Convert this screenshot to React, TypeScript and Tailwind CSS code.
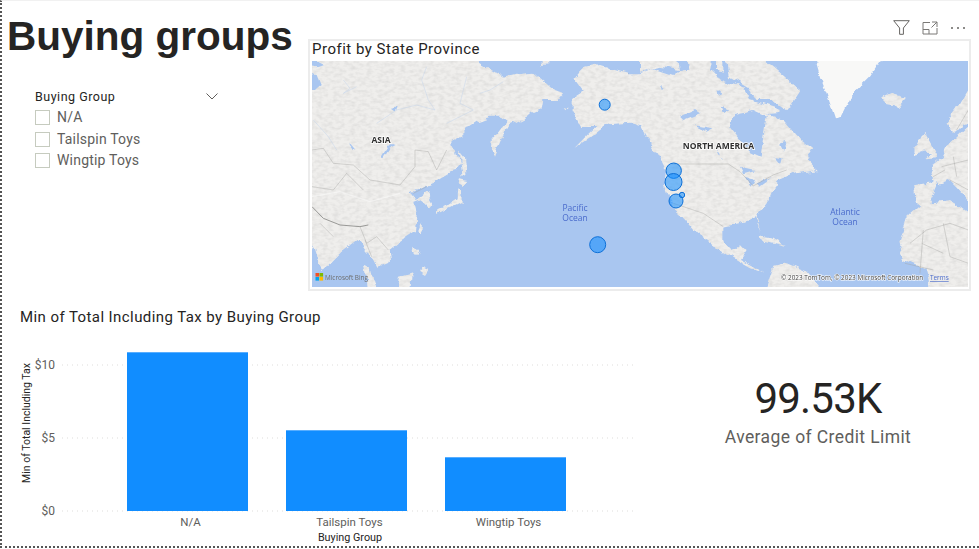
const ui = { fontFamily: "Roboto, 'Open Sans', sans-serif" };

const slicerItems = ["N/A", "Tailspin Toys", "Wingtip Toys"];

const bars = [
  { label: "N/A", x: 127, w: 121, top: 352 },
  { label: "Tailspin Toys", x: 286, w: 121, top: 430 },
  { label: "Wingtip Toys", x: 445, w: 121, top: 457 },
];

const ticks = [
  { label: "$10", y: 365 },
  { label: "$5", y: 438 },
  { label: "$0", y: 511 },
];

const bubbles = [
  { x: 604.7, y: 104.7, r: 5.5 },
  { x: 597.7, y: 244.7, r: 8 },
  { x: 673.7, y: 170.7, r: 7.7 },
  { x: 673.5, y: 182, r: 8.5 },
  { x: 676, y: 201, r: 7 },
  { x: 682, y: 195, r: 2.7 },
];

const LAND = "#efeeec";
const SEA = "#a9c6f0";

function WorldMap() {
  return (
    <svg width="656" height="226" viewBox="312 61 656 226" className="block">
      <defs>
        <filter id="relief" x="-10%" y="-10%" width="120%" height="120%" colorInterpolationFilters="sRGB">
          <feTurbulence type="fractalNoise" baseFrequency="0.025" numOctaves="5" seed="3" result="w" />
          <feDisplacementMap in="SourceGraphic" in2="w" scale="26" xChannelSelector="R" yChannelSelector="G" result="d" />
          <feTurbulence type="fractalNoise" baseFrequency="0.06 0.1" numOctaves="2" seed="7" result="n" />
          <feColorMatrix in="n" type="matrix" values="0 0 0 0 0.62  0 0 0 0 0.62  0 0 0 0 0.62  0 0 0 0.4 -0.16" result="g" />
          <feComposite in="g" in2="d" operator="in" result="t" />
          <feMerge>
            <feMergeNode in="d" />
            <feMergeNode in="t" />
          </feMerge>
        </filter>
        <filter id="coast" x="-10%" y="-10%" width="120%" height="120%" colorInterpolationFilters="sRGB">
          <feTurbulence type="fractalNoise" baseFrequency="0.04" numOctaves="4" seed="11" result="w" />
          <feDisplacementMap in="SourceGraphic" in2="w" scale="14" xChannelSelector="R" yChannelSelector="G" />
        </filter>
        <filter id="soft">
          <feGaussianBlur stdDeviation="0.4" />
        </filter>
      </defs>
      <rect x="312" y="61" width="656" height="226" fill={SEA} />

      <g filter="url(#soft)">
        {/* left half, drawn in crop coordinates */}
        <g transform="translate(300 10) scale(0.3333)">
          <g filter="url(#relief)" fill={LAND}>
            <path d="M0 110 L525 110 L530 153 L560 170 L610 200 L650 190 L700 185 L750 230 L790 245 L770 270 L730 270 L725 300 L680 320 L630 345 L605 385 L582 440 L575 420 L578 390 L600 360 L620 335 L600 320 L570 320 L530 335 L500 355 L470 385 L450 405 L470 420 L480 455 L455 490 L420 510 L375 530 L335 550 L350 570 L380 550 L397 580 L388 592 L365 570 L340 580 L350 620 L345 660 L300 690 L265 720 L270 755 L235 770 L222 745 L200 725 L180 700 L170 690 L130 720 L80 770 L60 780 L45 730 L36 700 L0 690 Z" />
            <path d="M195 770 L212 780 L235 860 L205 860 L200 795 Z" />
            <path d="M480 425 L492 440 L496 490 L488 500 L482 460 Z" />
            <path d="M480 505 L505 510 L490 528 L476 520 Z" />
            <path d="M472 538 L484 545 L485 575 L445 595 L410 612 L412 598 L440 585 L470 565 Z" />
            <path d="M362 640 L372 650 L362 668 L356 655 Z" />
            <path d="M345 710 L358 725 L352 742 L340 730 Z" />
            <path d="M365 770 L385 780 L375 795 L360 785 Z" />
            <path d="M300 800 L335 790 L330 860 L290 860 Z" />
            <path d="M785 290 L800 295 L795 298 Z" />
            <path d="M725 130 L745 130 L745 163 L725 165 Z" />
          </g>
          <g filter="url(#coast)" fill={SEA}>
            <path d="M20 190 L50 195 L62 225 L45 240 L20 240 Z" />
            <path d="M20 140 L70 165 L50 172 L20 168 Z" />
            <path d="M250 445 L270 415 L290 405 L282 402 L262 412 L244 442 Z" />
            <path d="M150 400 L165 418 L158 420 L146 404 Z" />
            <path d="M270 295 L290 290 L285 305 Z" />
          </g>
          <g fill="none" stroke="#bccfeb" strokeWidth="1.2">
            <path d="M380 170 L365 210 L385 270 L405 300 L350 285 L290 300 L230 340" />
            <path d="M130 210 L150 235 L130 250 L170 230" />
            <path d="M500 200 L480 280 L520 300 L440 340" />
            <path d="M540 250 L570 240 L610 215" />
            <path d="M40 330 L85 380 L110 420" />
          </g>
          <g fill="none" stroke="#a2a2a0" strokeWidth="1.2">
            <path d="M36 420 L70 415 L100 460 L160 465 L210 510 L300 525 L345 470 L345 420 L385 425 L410 480 L440 420" />
            <path d="M36 530 L100 540 L140 490 L190 540" />
            <path d="M36 590 L70 625 L120 645 L180 650 L205 645" strokeWidth="2.6" stroke="#8b8b89" />
            <path d="M180 650 L200 700 L230 680 L265 720 M195 690 L215 740 M60 640 L100 680" />
            <path d="M340 550 L380 530" />
          </g>
          <path d="M36 560 L120 545 L210 575 L300 550" stroke="#ffffff" strokeWidth="4" fill="none" opacity="0.4" />
          <path d="M985 190 L985 335" stroke="#a8a8a5" strokeWidth="1.5" fill="none" />
        </g>

        {/* right half */}
        <g transform="translate(640 10) scale(0.3333)">
          <g filter="url(#relief)" fill={LAND}>
            <path d="M-200 210 L-170 175 L-120 165 L-35 190 L0 190 L40 175 L100 195 L130 175 L200 170 L230 200 L270 215 L310 230 L330 270 L360 280 L420 300 L410 310 L380 312 L430 330 L480 390 L520 420 L500 450 L530 480 L470 490 L420 510 L395 545 L385 570 L355 610 L350 625 L362 660 L345 625 L300 640 L250 650 L250 690 L275 720 L300 700 L320 720 L300 750 L340 770 L370 790 L330 775 L260 735 L210 700 L170 670 L130 620 L95 590 L75 530 L80 490 L60 450 L20 380 L0 345 L-35 335 L-90 340 L-120 360 L-150 385 L-190 410 L-150 370 L-125 345 L-180 345 L-205 300 L-205 265 L-175 245 Z" />
            <path d="M0 120 L110 120 L120 180 L60 170 L0 185 Z" />
            <path d="M135 120 L220 120 L205 190 L150 180 Z" />
            <path d="M255 120 L340 120 L400 170 L480 240 L440 300 L400 270 L350 270 L320 230 L270 200 Z" />
            <path d="M225 120 L250 120 L250 185 L225 180 Z" />
            <path d="M730 265 L760 250 L795 260 L770 290 L740 285 Z" />
            <path d="M350 675 L395 682 L440 708 L400 698 L365 690 Z" />
            <path d="M370 860 L400 770 L440 760 L500 785 L560 860 Z" />
            <path d="M820 425 L850 362 L865 390 L895 445 L850 448 L870 430 Z" />
            <path d="M820 410 L840 400 L845 430 L822 435 Z" />
            <path d="M870 500 L880 465 L910 440 L930 400 L985 350 L1030 350 L1030 570 L985 570 L950 530 L930 510 L905 520 L880 515 Z" />
            <path d="M920 340 L950 300 L985 240 L1030 200 L1030 320 L950 360 L935 365 Z" />
            <path d="M826 525 L885 515 L895 520 L860 600 L830 575 Z" />
            <path d="M775 700 L800 625 L850 580 L930 570 L985 610 L1030 610 L1030 860 L880 860 L860 780 L790 750 Z" />
          </g>
          <path d="M530 165 L560 120 L745 120 L690 200 L640 250 L605 320 L585 325 L560 250 L540 200 Z" fill="#f8f8f7" filter="url(#coast)" />
          <g filter="url(#coast)" fill={SEA}>
            <path d="M380 318 L372 370 L362 440 L330 425 L300 390 L268 350 L285 312 L340 300 Z" />
            <path d="M120 320 L165 300 L180 310 L130 330 Z" />
            <path d="M160 345 L220 355 L200 365 Z" />
            <path d="M230 415 L240 430 L250 455 L236 430 Z" />
            <path d="M300 470 L345 480 L310 490 Z" />
            <path d="M315 500 L335 530 L345 510 Z" />
            <path d="M350 520 L395 505 L360 530 Z" />
            <path d="M420 400 L440 395 L432 425 Z" />
            <path d="M60 225 L75 238 L65 243 Z" />
            <path d="M245 290 L265 298 L250 306 Z" />
            <path d="M230 240 L245 252 L232 258 Z" />
            <path d="M400 440 L425 445 L420 465 Z" />
          </g>
          <g fill="none" stroke="#a2a2a0" strokeWidth="1.2">
            <path d="M95 462 L265 462 L300 485 L340 528 L400 495 L440 480" />
            <path d="M100 580 L190 610 L250 650" />
            <path d="M810 700 L860 660 L930 640 L985 660 M850 660 L840 790 M910 640 L930 740 L985 760 M845 700 L910 730" />
            <path d="M905 470 L985 450 M930 510 L985 540 M940 440 L950 500 M880 500 L915 480" />
            <path d="M950 360 L985 300" />
            <path d="M795 760 L880 780" />
          </g>
        </g>
      </g>

      <g style={{ fontFamily: "'Open Sans', sans-serif" }}>
        <text x="381" y="143" textAnchor="middle" fontSize="8.5" fontWeight="700" fill="#2f2f2f" stroke="#ffffff" strokeWidth="1.5" paintOrder="stroke">ASIA</text>
        <text x="718.5" y="149" textAnchor="middle" fontSize="8.5" fontWeight="700" fill="#2f2f2f" stroke="#ffffff" strokeWidth="1.5" paintOrder="stroke">NORTH AMERICA</text>
        <g textAnchor="middle" fontSize="8.5" fill="#4a6bcc">
          <text x="575" y="211">Pacific</text>
          <text x="575" y="221">Ocean</text>
          <text x="845" y="215">Atlantic</text>
          <text x="845" y="225">Ocean</text>
        </g>
        <text x="325" y="279.5" fontSize="6.4" fill="#6d6d6d">Microsoft Bing</text>
        <text x="781" y="280" fontSize="6.4" fill="#3c3c3c" stroke="#ffffff" strokeWidth="1.2" paintOrder="stroke">© 2023 TomTom, © 2023 Microsoft Corporation</text>
        <text x="930" y="280" fontSize="6.4" fill="#4a6bcc" textDecoration="underline">Terms</text>
      </g>

      <rect x="315.5" y="273" width="3.6" height="3.6" fill="#f25022" />
      <rect x="319.5" y="273" width="3.6" height="3.6" fill="#7fba00" />
      <rect x="315.5" y="277" width="3.6" height="3.6" fill="#00a4ef" />
      <rect x="319.5" y="277" width="3.6" height="3.6" fill="#ffb900" />

      {bubbles.map((b) => (
        <circle key={`${b.x}-${b.y}`} cx={b.x} cy={b.y} r={b.r} fill="#118dff" fillOpacity="0.55" stroke="#0d6fd6" strokeWidth="1" />
      ))}
    </svg>
  );
}

function BarChart() {
  return (
    <svg width="640" height="217" viewBox="0 330 640 217" className="block" style={ui}>
      {ticks.map((t) => (
        <g key={t.label}>
          <line x1="62" x2="635" y1={t.y} y2={t.y} stroke="#dedddb" strokeWidth="1" strokeDasharray="1 4" />
          <text x="55" y={t.y + 4} textAnchor="end" fontSize="12" fill="#605e5c">{t.label}</text>
        </g>
      ))}
      {bars.map((b) => (
        <g key={b.label}>
          <rect x={b.x} y={b.top} width={b.w} height={511 - b.top} fill="#118dff" />
          <rect x={b.x} y={b.top} width={b.w} height="1" fill="#58aeff" />
          <text x={b.x + b.w / 2 + 3} y="526" textAnchor="middle" fontSize="11.5" fill="#605e5c">{b.label}</text>
        </g>
      ))}
      <text x="350" y="541" textAnchor="middle" fontSize="10.8" fill="#252423">Buying Group</text>
      <text transform="translate(30 423) rotate(-90)" textAnchor="middle" fontSize="10.5" fill="#252423">Min of Total Including Tax</text>
    </svg>
  );
}

function Toolbar() {
  return (
    <div className="flex h-[38px] items-center justify-end gap-[12px] pt-[15px] pr-[5px]">
      <svg width="17" height="15" viewBox="0 0 17 15" fill="none" stroke="#666462" strokeWidth="1">
        <path d="M0.7 0.7 H16.3 L10.4 8 V14.3 H6.6 V8 Z" />
      </svg>
      <svg width="16" height="14" viewBox="0 0 16 14" fill="none" stroke="#7a7876" strokeWidth="1">
        <path d="M8 1.5 H1 V13 H15 V7 M1 8.5 H7 V13 M10 1 H15 V6 M15 1 L9.5 6.5" />
      </svg>
      <svg width="16" height="4" viewBox="0 0 16 4" fill="#666462">
        <circle cx="2" cy="2" r="1" />
        <circle cx="8" cy="2" r="1" />
        <circle cx="14" cy="2" r="1" />
      </svg>
    </div>
  );
}

export default function App() {
  return (
    <div
      className="flex h-[548px] w-[979px] flex-col border-t border-b-2 border-l-2 border-dotted border-t-[#f1f1f1] border-b-[#555555] border-l-[#555555] bg-white"
      style={{ ...ui, borderTopStyle: "solid" }}
    >
      <div className="flex h-[304px] shrink-0">
        <div className="w-[306px] shrink-0">
          <h1
            className="pt-[7px] pl-[5px] text-[40.5px] leading-[56px] font-bold whitespace-nowrap text-[#252423]"
            style={{ fontFamily: "'Liberation Sans', Arial, sans-serif" }}
          >
            Buying groups
          </h1>
          <div className="mt-[25px] w-[184px] pl-[33px]">
            <div className="flex h-[16px] w-[184px] items-center justify-between">
              <span className="text-[12.5px] tracking-[0.5px] text-[#252423]">Buying Group</span>
              <svg width="12" height="7" viewBox="0 0 12 7" fill="none" stroke="#605e5c" strokeWidth="1" className="mr-[1px] -translate-y-[1px]">
                <path d="M0.5 0.5 L6 6 L11.5 0.5" />
              </svg>
            </div>
            <div className="mt-[5px] flex flex-col gap-[6.5px]">
              {slicerItems.map((item) => (
                <div key={item} className="flex h-[15px] items-center gap-[7px]">
                  <span className="h-[15px] w-[15px] shrink-0 border border-[#c6cbbf] bg-white" />
                  <span className="text-[14px] tracking-[0.2px] whitespace-nowrap text-[#605e5c]">{item}</span>
                </div>
              ))}
            </div>
          </div>
        </div>

        <div className="w-[663px] shrink-0">
          <Toolbar />
          <div className="h-[252px] border-2 border-[#ececec] pl-[2px]">
            <div className="flex h-[20px] items-center pb-[4px] text-[15px] leading-none tracking-[0.5px] whitespace-nowrap text-[#252423]">
              Profit by State Province
            </div>
            <WorldMap />
          </div>
        </div>
      </div>

      <div className="flex min-h-0 flex-1">
        <div className="w-[638px] shrink-0">
          <div className="h-[25px] pl-[18px] text-[15px] leading-[24px] tracking-[0.42px] text-[#252423]">
            Min of Total Including Tax by Buying Group
          </div>
          <div className="-ml-[2px]">
            <BarChart />
          </div>
        </div>
        <div className="flex flex-1 flex-col items-center pt-[69px] pl-[17px]">
          <div className="text-[42px] leading-[50px] tracking-[-0.8px] text-[#252423]">99.53K</div>
          <div className="text-[17.5px] leading-[27px] tracking-[0.4px] text-[#605e5c]">Average of Credit Limit</div>
        </div>
      </div>
    </div>
  );
}
